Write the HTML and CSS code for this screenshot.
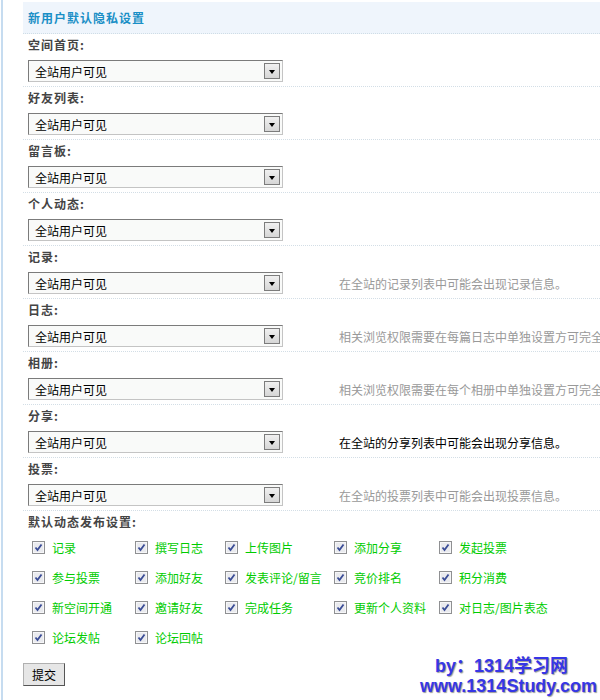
FILE: index.html
```html
<!DOCTYPE html>
<html lang="zh-CN">
<head>
<meta charset="utf-8">
<title>新用户默认隐私设置</title>
<link rel="stylesheet" href="styles.css">
</head>
<body>
<div class="wrap">
  <div class="head">新用户默认隐私设置</div>

  <div class="row">
    <div class="label">空间首页:</div>
    <div class="line"><div class="select"><span class="sel-text">全站用户可见</span><span class="sel-btn"></span></div></div>
  </div>
  <div class="row">
    <div class="label">好友列表:</div>
    <div class="line"><div class="select"><span class="sel-text">全站用户可见</span><span class="sel-btn"></span></div></div>
  </div>
  <div class="row">
    <div class="label">留言板:</div>
    <div class="line"><div class="select"><span class="sel-text">全站用户可见</span><span class="sel-btn"></span></div></div>
  </div>
  <div class="row">
    <div class="label">个人动态:</div>
    <div class="line"><div class="select"><span class="sel-text">全站用户可见</span><span class="sel-btn"></span></div></div>
  </div>
  <div class="row">
    <div class="label">记录:</div>
    <div class="line"><div class="select"><span class="sel-text">全站用户可见</span><span class="sel-btn"></span></div><span class="desc">在全站的记录列表中可能会出现记录信息。</span></div>
  </div>
  <div class="row">
    <div class="label">日志:</div>
    <div class="line"><div class="select"><span class="sel-text">全站用户可见</span><span class="sel-btn"></span></div><span class="desc">相关浏览权限需要在每篇日志中单独设置方可完全生效。</span></div>
  </div>
  <div class="row">
    <div class="label">相册:</div>
    <div class="line"><div class="select"><span class="sel-text">全站用户可见</span><span class="sel-btn"></span></div><span class="desc">相关浏览权限需要在每个相册中单独设置方可完全生效。</span></div>
  </div>
  <div class="row">
    <div class="label">分享:</div>
    <div class="line"><div class="select"><span class="sel-text">全站用户可见</span><span class="sel-btn"></span></div><span class="desc dark">在全站的分享列表中可能会出现分享信息。</span></div>
  </div>
  <div class="row">
    <div class="label">投票:</div>
    <div class="line"><div class="select"><span class="sel-text">全站用户可见</span><span class="sel-btn"></span></div><span class="desc">在全站的投票列表中可能会出现投票信息。</span></div>
  </div>

  <div class="feed">
    <div class="label feed-label">默认动态发布设置:</div>
    <div class="opts">
      <label class="opt"><svg class="cb" viewBox="0 0 13 13"><rect x="0.5" y="0.5" width="12" height="12" fill="#e9eaee" stroke="#8f9092"/><rect x="1.5" y="1.5" width="10" height="10" fill="none" stroke="#f6f6f8"/><polyline points="3.5,6.5 5.5,9 9.5,3.5" fill="none" stroke="#3a4c96" stroke-width="1.8"/></svg><span>记录</span></label>
      <label class="opt"><svg class="cb" viewBox="0 0 13 13"><rect x="0.5" y="0.5" width="12" height="12" fill="#e9eaee" stroke="#8f9092"/><rect x="1.5" y="1.5" width="10" height="10" fill="none" stroke="#f6f6f8"/><polyline points="3.5,6.5 5.5,9 9.5,3.5" fill="none" stroke="#3a4c96" stroke-width="1.8"/></svg><span>撰写日志</span></label>
      <label class="opt"><svg class="cb" viewBox="0 0 13 13"><rect x="0.5" y="0.5" width="12" height="12" fill="#e9eaee" stroke="#8f9092"/><rect x="1.5" y="1.5" width="10" height="10" fill="none" stroke="#f6f6f8"/><polyline points="3.5,6.5 5.5,9 9.5,3.5" fill="none" stroke="#3a4c96" stroke-width="1.8"/></svg><span>上传图片</span></label>
      <label class="opt"><svg class="cb" viewBox="0 0 13 13"><rect x="0.5" y="0.5" width="12" height="12" fill="#e9eaee" stroke="#8f9092"/><rect x="1.5" y="1.5" width="10" height="10" fill="none" stroke="#f6f6f8"/><polyline points="3.5,6.5 5.5,9 9.5,3.5" fill="none" stroke="#3a4c96" stroke-width="1.8"/></svg><span>添加分享</span></label>
      <label class="opt"><svg class="cb" viewBox="0 0 13 13"><rect x="0.5" y="0.5" width="12" height="12" fill="#e9eaee" stroke="#8f9092"/><rect x="1.5" y="1.5" width="10" height="10" fill="none" stroke="#f6f6f8"/><polyline points="3.5,6.5 5.5,9 9.5,3.5" fill="none" stroke="#3a4c96" stroke-width="1.8"/></svg><span>发起投票</span></label>

      <label class="opt"><svg class="cb" viewBox="0 0 13 13"><rect x="0.5" y="0.5" width="12" height="12" fill="#e9eaee" stroke="#8f9092"/><rect x="1.5" y="1.5" width="10" height="10" fill="none" stroke="#f6f6f8"/><polyline points="3.5,6.5 5.5,9 9.5,3.5" fill="none" stroke="#3a4c96" stroke-width="1.8"/></svg><span>参与投票</span></label>
      <label class="opt"><svg class="cb" viewBox="0 0 13 13"><rect x="0.5" y="0.5" width="12" height="12" fill="#e9eaee" stroke="#8f9092"/><rect x="1.5" y="1.5" width="10" height="10" fill="none" stroke="#f6f6f8"/><polyline points="3.5,6.5 5.5,9 9.5,3.5" fill="none" stroke="#3a4c96" stroke-width="1.8"/></svg><span>添加好友</span></label>
      <label class="opt"><svg class="cb" viewBox="0 0 13 13"><rect x="0.5" y="0.5" width="12" height="12" fill="#e9eaee" stroke="#8f9092"/><rect x="1.5" y="1.5" width="10" height="10" fill="none" stroke="#f6f6f8"/><polyline points="3.5,6.5 5.5,9 9.5,3.5" fill="none" stroke="#3a4c96" stroke-width="1.8"/></svg><span>发表评论/留言</span></label>
      <label class="opt"><svg class="cb" viewBox="0 0 13 13"><rect x="0.5" y="0.5" width="12" height="12" fill="#e9eaee" stroke="#8f9092"/><rect x="1.5" y="1.5" width="10" height="10" fill="none" stroke="#f6f6f8"/><polyline points="3.5,6.5 5.5,9 9.5,3.5" fill="none" stroke="#3a4c96" stroke-width="1.8"/></svg><span>竞价排名</span></label>
      <label class="opt"><svg class="cb" viewBox="0 0 13 13"><rect x="0.5" y="0.5" width="12" height="12" fill="#e9eaee" stroke="#8f9092"/><rect x="1.5" y="1.5" width="10" height="10" fill="none" stroke="#f6f6f8"/><polyline points="3.5,6.5 5.5,9 9.5,3.5" fill="none" stroke="#3a4c96" stroke-width="1.8"/></svg><span>积分消费</span></label>

      <label class="opt"><svg class="cb" viewBox="0 0 13 13"><rect x="0.5" y="0.5" width="12" height="12" fill="#e9eaee" stroke="#8f9092"/><rect x="1.5" y="1.5" width="10" height="10" fill="none" stroke="#f6f6f8"/><polyline points="3.5,6.5 5.5,9 9.5,3.5" fill="none" stroke="#3a4c96" stroke-width="1.8"/></svg><span>新空间开通</span></label>
      <label class="opt"><svg class="cb" viewBox="0 0 13 13"><rect x="0.5" y="0.5" width="12" height="12" fill="#e9eaee" stroke="#8f9092"/><rect x="1.5" y="1.5" width="10" height="10" fill="none" stroke="#f6f6f8"/><polyline points="3.5,6.5 5.5,9 9.5,3.5" fill="none" stroke="#3a4c96" stroke-width="1.8"/></svg><span>邀请好友</span></label>
      <label class="opt"><svg class="cb" viewBox="0 0 13 13"><rect x="0.5" y="0.5" width="12" height="12" fill="#e9eaee" stroke="#8f9092"/><rect x="1.5" y="1.5" width="10" height="10" fill="none" stroke="#f6f6f8"/><polyline points="3.5,6.5 5.5,9 9.5,3.5" fill="none" stroke="#3a4c96" stroke-width="1.8"/></svg><span>完成任务</span></label>
      <label class="opt"><svg class="cb" viewBox="0 0 13 13"><rect x="0.5" y="0.5" width="12" height="12" fill="#e9eaee" stroke="#8f9092"/><rect x="1.5" y="1.5" width="10" height="10" fill="none" stroke="#f6f6f8"/><polyline points="3.5,6.5 5.5,9 9.5,3.5" fill="none" stroke="#3a4c96" stroke-width="1.8"/></svg><span>更新个人资料</span></label>
      <label class="opt"><svg class="cb" viewBox="0 0 13 13"><rect x="0.5" y="0.5" width="12" height="12" fill="#e9eaee" stroke="#8f9092"/><rect x="1.5" y="1.5" width="10" height="10" fill="none" stroke="#f6f6f8"/><polyline points="3.5,6.5 5.5,9 9.5,3.5" fill="none" stroke="#3a4c96" stroke-width="1.8"/></svg><span>对日志/图片表态</span></label>

      <label class="opt"><svg class="cb" viewBox="0 0 13 13"><rect x="0.5" y="0.5" width="12" height="12" fill="#e9eaee" stroke="#8f9092"/><rect x="1.5" y="1.5" width="10" height="10" fill="none" stroke="#f6f6f8"/><polyline points="3.5,6.5 5.5,9 9.5,3.5" fill="none" stroke="#3a4c96" stroke-width="1.8"/></svg><span>论坛发帖</span></label>
      <label class="opt"><svg class="cb" viewBox="0 0 13 13"><rect x="0.5" y="0.5" width="12" height="12" fill="#e9eaee" stroke="#8f9092"/><rect x="1.5" y="1.5" width="10" height="10" fill="none" stroke="#f6f6f8"/><polyline points="3.5,6.5 5.5,9 9.5,3.5" fill="none" stroke="#3a4c96" stroke-width="1.8"/></svg><span>论坛回帖</span></label>
    </div>
  </div>

  <button class="submit" type="button">提交</button>
</div>

<div class="watermark">
  <div class="wm1">by：1314学习网</div>
  <div class="wm2">www.1314Study.com</div>
</div>
</body>
</html>
```

FILE: styles.css
```css
html, body {
  margin: 0;
  padding: 0;
  background: #fff;
  overflow: hidden;
}
body {
  position: relative;
  min-height: 700px;
  margin-left: 1px;
  border-left: 2px solid #c6dcf0;
  padding-top: 2px;
  font-family: "Noto Sans CJK SC", "Liberation Sans", sans-serif;
  font-size: 12px;
  color: #000;
}
.wrap {
  margin-left: 20px;
  overflow: hidden;
}
.head {
  height: 31px;
  line-height: 31px;
  padding-left: 5px;
  background: #eff5fc;
  border-bottom: 1px dotted #cfdde6;
  color: #1a8fc6;
  font-weight: bold;
  letter-spacing: 1px;
}
.row {
  padding-left: 5px;
  padding-bottom: 4px;
  border-bottom: 1px dotted #d3dee6;
}
.label {
  height: 22px;
  line-height: 22px;
  margin-bottom: 4px;
  color: #444;
  font-weight: bold;
  letter-spacing: 1px;
}
.line {
  display: flex;
  align-items: center;
  white-space: nowrap;
}
.select {
  flex: none;
  box-sizing: border-box;
  width: 255px;
  height: 22px;
  display: flex;
  align-items: center;
  padding-left: 6px;
  border: 1px solid;
  border-color: #7b7b7b #c4c4c4 #c4c4c4 #7b7b7b;
  background: #f9faf9;
}
.sel-btn {
  margin-left: auto;
  margin-right: 2px;
  box-sizing: border-box;
  width: 16px;
  height: 16px;
  border: 1px solid #7c7c7c;
  background: linear-gradient(#f0f0f0, #d6d6d6);
  display: flex;
  align-items: center;
  justify-content: center;
}
.sel-btn::after {
  content: "";
  width: 0;
  height: 0;
  margin-top: 1px;
  border-top: 4px solid #000;
  border-left: 3.5px solid transparent;
  border-right: 3.5px solid transparent;
}
.desc {
  margin-left: 56px;
  color: #999;
}
.desc.dark {
  color: #000;
}
.feed {
  padding-left: 5px;
}
.feed-label {
  height: 21px;
  line-height: 21px;
  padding-top: 0;
  margin-bottom: 0;
}
.opts {
  display: grid;
  grid-template-columns: 103px 90px 109px 105px auto;
  grid-auto-rows: 30px;
  align-items: center;
  white-space: nowrap;
}
.opt {
  display: flex;
  align-items: center;
  color: #00cc00;
}
.cb {
  width: 13px;
  height: 13px;
  margin-left: 4px;
  margin-right: 7px;
  flex: none;
}
.submit {
  display: block;
  margin-top: 11px;
  box-sizing: border-box;
  width: 42px;
  height: 23px;
  padding: 0;
  border: 1px solid;
  border-color: #b0b0b0 #555 #555 #b0b0b0;
  background: #e6e6e6;
  font-family: "Noto Sans CJK SC", sans-serif;
  font-size: 12px;
  color: #000;
}
.watermark {
  position: absolute;
  left: 417px;
  top: 656px;
  font-family: "Liberation Sans", "Noto Sans CJK SC", sans-serif;
  font-weight: bold;
  font-size: 18px;
  line-height: 20px;
  color: #3636e6;
  text-shadow: 1px 1px 1px #9a9a9a;
  white-space: nowrap;
}
.wm1 {
  padding-left: 15px;
}
```
